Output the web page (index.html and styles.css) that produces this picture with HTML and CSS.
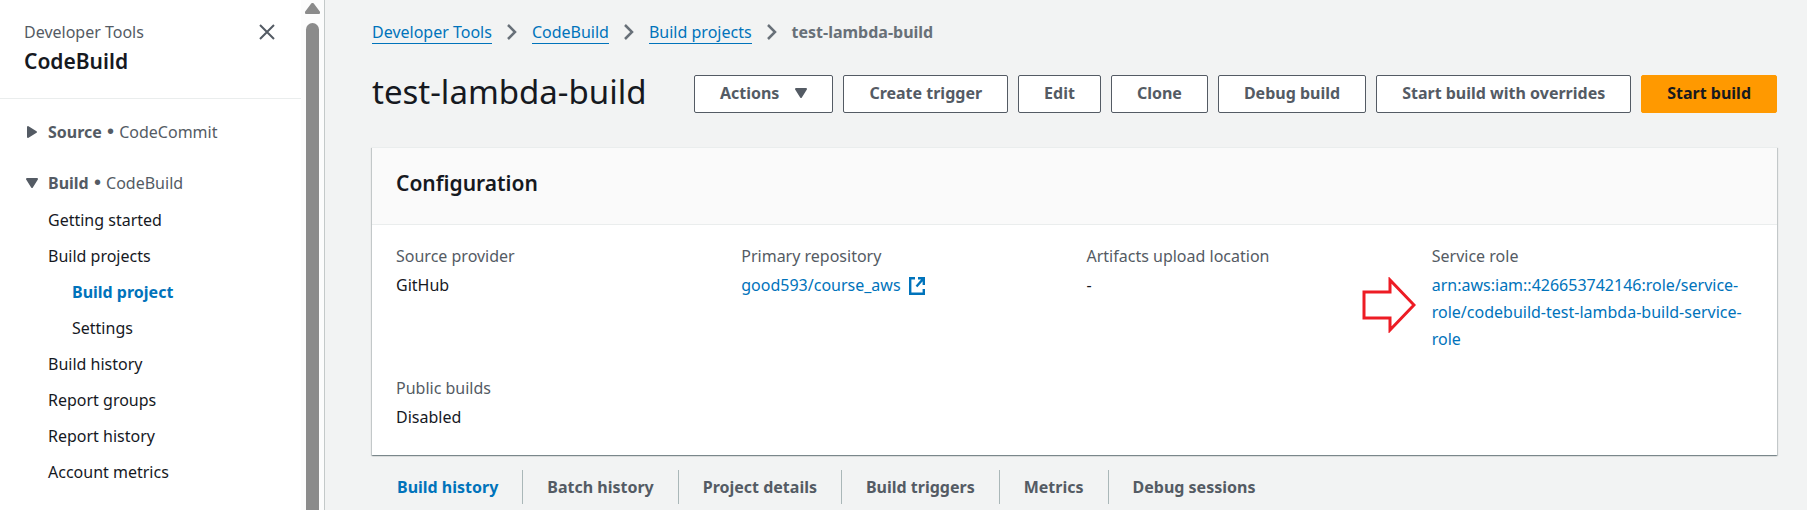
FILE: index.html
```html
<!DOCTYPE html>
<html lang="en">
<head>
<meta charset="utf-8">
<title>test-lambda-build - CodeBuild</title>
<link rel="stylesheet" href="styles.css">
</head>
<body>
<div class="app">
  <aside class="sidebar">
    <div class="sidebar-content">
      <header class="sidebar-header">
        <div>
          <a class="suite" href="#">Developer Tools</a>
          <h2 class="service">CodeBuild</h2>
        </div>
        <button class="close" type="button" aria-label="Close navigation">
          <svg width="16" height="16" viewBox="0 0 16 16" fill="none" stroke="#545b64" stroke-width="2"><path d="M1 1l14 14M15 1L1 15"/></svg>
        </button>
      </header>
      <nav class="nav">
        <button class="group" type="button" aria-expanded="false">
          <svg width="12" height="14" viewBox="0 0 12 14" fill="#545b64" stroke="#545b64" stroke-width="2" stroke-linejoin="round"><path d="M2 2v10l8-5z"/></svg>
          <span><b>Source</b> <span class="dot">•</span> CodeCommit</span>
        </button>
        <button class="group" type="button" aria-expanded="true">
          <svg width="12" height="12" viewBox="0 0 12 12" fill="#545b64" stroke="#545b64" stroke-width="2" stroke-linejoin="round"><path d="M1 2h10l-5 8z"/></svg>
          <span><b>Build</b> <span class="dot">•</span> CodeBuild</span>
        </button>
        <ul class="links">
          <li><a href="#">Getting started</a></li>
          <li><a href="#">Build projects</a>
            <ul class="links nested">
              <li><a class="active" href="#">Build project</a></li>
              <li><a href="#">Settings</a></li>
            </ul>
          </li>
          <li><a href="#">Build history</a></li>
          <li><a href="#">Report groups</a></li>
          <li><a href="#">Report history</a></li>
          <li><a href="#">Account metrics</a></li>
        </ul>
      </nav>
    </div>
    <div class="scrollbar" aria-hidden="true">
      <svg width="15" height="11" viewBox="0 0 15 11" fill="#8b8b8b" stroke="#8b8b8b" stroke-width="2" stroke-linejoin="round"><path d="M7 1h1l6 8v1H1V9z"/></svg>
      <div class="thumb"></div>
    </div>
  </aside>

  <main class="main">
    <nav aria-label="Breadcrumbs">
      <ol class="crumbs">
        <li><a href="#">Developer Tools</a><svg width="10" height="16" viewBox="0 0 10 16" fill="none" stroke="#687078" stroke-width="2.5"><path d="M1 1l7 7-7 7"/></svg></li>
        <li><a href="#">CodeBuild</a><svg width="10" height="16" viewBox="0 0 10 16" fill="none" stroke="#687078" stroke-width="2.5"><path d="M1 1l7 7-7 7"/></svg></li>
        <li><a href="#">Build projects</a><svg width="10" height="16" viewBox="0 0 10 16" fill="none" stroke="#687078" stroke-width="2.5"><path d="M1 1l7 7-7 7"/></svg></li>
        <li><b>test-lambda-build</b></li>
      </ol>
    </nav>

    <div class="title-row">
      <h1>test-lambda-build</h1>
      <div class="actions">
        <button class="btn" type="button">Actions
          <svg width="12" height="12" viewBox="0 0 12 12" fill="#545b64" stroke="#545b64" stroke-width="2" stroke-linejoin="round"><path d="M1 2h10l-5 8z"/></svg>
        </button>
        <button class="btn" type="button">Create trigger</button>
        <button class="btn" type="button">Edit</button>
        <button class="btn" type="button">Clone</button>
        <button class="btn" type="button">Debug build</button>
        <button class="btn" type="button">Start build with overrides</button>
        <button class="btn primary" type="button">Start build</button>
      </div>
    </div>

    <section class="panel">
      <h2 class="panel-header">Configuration</h2>
      <dl class="fields">
        <div><dt>Source provider</dt><dd>GitHub</dd></div>
        <div><dt>Primary repository</dt><dd><a class="repo" href="#">good593/course_aws
          <svg width="18" height="20" viewBox="0 0 18 20" fill="none" stroke="#0073bb" stroke-width="2.4"><path d="M7 2.2H2.2v15.6h13.6V13M10 2.2h5.8V9M15.5 2.5L8.5 10.5"/></svg></a></dd></div>
        <div><dt>Artifacts upload location</dt><dd>-</dd></div>
        <div class="role"><dt>Service role</dt><dd><a href="#">arn:aws:iam::426653742146:role/service-<wbr>role/codebuild-test-lambda-build-service-<wbr>role</a></dd>
          <svg class="pointer" width="54" height="56" viewBox="0 0 54 56" fill="none" stroke="#ed1c24" stroke-width="3"><path d="M2 15h26V3l24 25-24 25V41H2z"/></svg>
        </div>
        <div><dt>Public builds</dt><dd>Disabled</dd></div>
      </dl>
    </section>

    <nav class="tabs" aria-label="Project sections">
      <a class="active" href="#">Build history</a>
      <a href="#">Batch history</a>
      <a href="#">Project details</a>
      <a href="#">Build triggers</a>
      <a href="#">Metrics</a>
      <a href="#">Debug sessions</a>
    </nav>
  </main>
</div>
</body>
</html>
```
FILE: styles.css
```css
* { box-sizing: border-box; }

body {
  margin: 0;
  background: #f2f3f3;
  color: #16191f;
  font: 16px/26px "Noto Sans", "Open Sans", sans-serif;
}

a { color: #0073bb; text-decoration: none; }
b { font-weight: 700; }
button { font: inherit; color: inherit; cursor: pointer; }
svg { flex: none; }
h1, h2, ul, ol, dl, dd { margin: 0; padding: 0; }
ul, ol { list-style: none; }

.app { display: flex; height: 100vh; overflow: hidden; }

/* Sidebar */
.sidebar {
  display: flex;
  flex: none;
  width: 325px;
  background: #fff;
  border-right: 1px solid #c4c9c9;
}
.sidebar-content { flex: 1; }
.sidebar-header {
  display: flex;
  justify-content: space-between;
  align-items: flex-start;
  padding: 19px 26px 21px 24px;
  border-bottom: 1px solid #eaeded;
}
.suite { color: #545b64; display: block; }
.service { font-size: 21px; line-height: 32px; font-weight: 600; }
.close {
  display: flex;
  padding: 5px 0;
  border: 0;
  background: none;
}
.nav { padding: 20px 24px 0; }
.group {
  display: flex;
  align-items: center;
  gap: 10px;
  width: 100%;
  margin-bottom: 25px;
  padding: 0 0 0 2px;
  border: 0;
  background: none;
  color: #545b64;
  text-align: left;
}
.group svg { width: 12px; }
.dot { margin: 0 1px; font-family: "Liberation Sans", sans-serif; font-size: 20px; line-height: 1; }
.nav .group:last-of-type { margin-bottom: 6px; }
.links { padding-left: 24px; }
.links a { display: block; padding: 5px 0; color: #16191f; }
.links .active { color: #0073bb; font-weight: 700; }
.scrollbar {
  display: flex;
  flex-direction: column;
  align-items: center;
  gap: 9px;
  width: 23px;
  padding-top: 3px;
  background: #fcfcfc;
}
.thumb {
  flex: 1;
  width: 13px;
  background: #8b8b8b;
  border-radius: 7px 7px 0 0;
}

/* Main column */
.main { flex: 1; padding: 19px 30px 0 47px; }
.crumbs, .crumbs li { display: flex; align-items: center; }
.crumbs a { line-height: 22px; border-bottom: 1px solid #0073bb; }
.crumbs svg { margin: 0 15px; }
.crumbs b { color: #687078; }

.title-row {
  display: flex;
  justify-content: space-between;
  align-items: flex-start;
  margin: 30px 0 34px;
}
h1 { font-size: 33px; line-height: 34px; font-weight: 400; }
.actions { display: flex; gap: 10px; }
.btn {
  display: flex;
  align-items: center;
  gap: 16px;
  height: 38px;
  padding: 0 25px 2px;
  border: 1px solid #545b64;
  border-radius: 2px;
  background: #fff;
  color: #545b64;
  font-weight: 700;
  white-space: nowrap;
}
.btn.primary { background: #ff9900; border-color: #ff9900; color: #16191f; }

.panel {
  background: #fff;
  border-top: 1px solid #eaeded;
  box-shadow: 0 1px 1px 0 rgba(0, 28, 36, .3), 1px 1px 1px 0 rgba(0, 28, 36, .15), -1px 1px 1px 0 rgba(0, 28, 36, .15);
}
.panel-header {
  padding: 19px 24px 25px;
  background: #fafafa;
  border-bottom: 1px solid #eaeded;
  font-size: 21px;
  line-height: 32px;
  font-weight: 600;
}
.fields {
  display: grid;
  grid-template-columns: repeat(4, 1fr);
  gap: 22px 24px;
  padding: 18px 24px 24px;
}
dt { color: #545b64; margin-bottom: 3px; }
dd { line-height: 27px; }
.repo { display: inline-flex; align-items: center; gap: 7px; }
.role { position: relative; }
.pointer { position: absolute; left: -70px; top: 34px; }

.tabs { display: flex; padding-top: 15px; }
.tabs a {
  padding: 4px 24px;
  border-left: 1px solid #aab7b8;
  color: #545b64;
  font-weight: 700;
}
.tabs a:first-child { border-left-color: transparent; }
.tabs .active { color: #0073bb; }
```
